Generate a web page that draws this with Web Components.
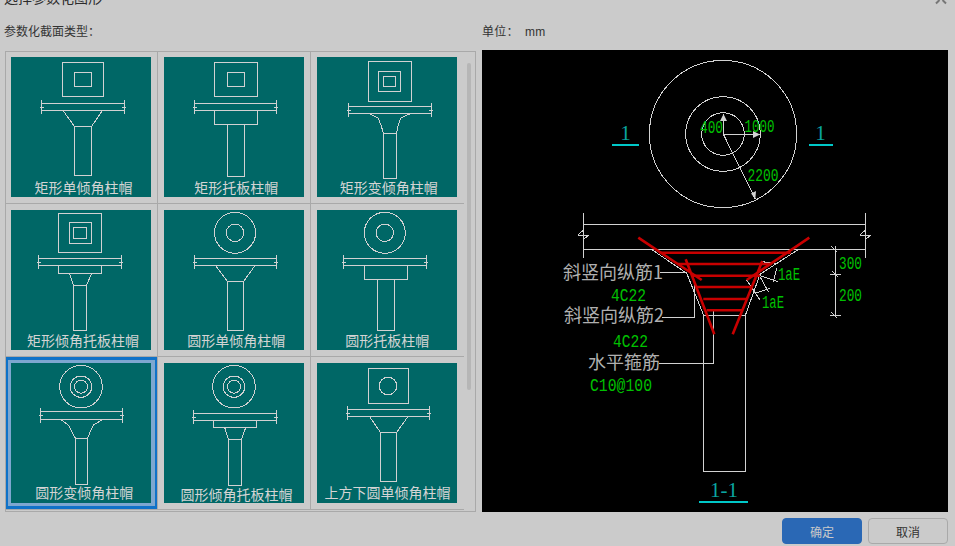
<!DOCTYPE html>
<html lang="zh"><head><meta charset="utf-8"><title>选择参数化图形</title>
<style>
html,body{margin:0;padding:0;height:100%;overflow:hidden;background:#cbcbcb}
body{font-family:"Liberation Sans","Noto Sans CJK SC",sans-serif}
</style></head><body>
<param-dialog>
  <span slot="title">选择参数化图形</span>
  <span slot="listlabel">参数化截面类型：</span>
  <span slot="unit">单位：</span><span slot="unitval">mm</span>
  <cap-thumb slot="list" data-v="11 57" style="--dx:2.5px;--dy:0px" data-d="r62.5,62.5,103.5,96.5 r74.5,72.5,91.5,86.5 s41.5,124.5,103.5,110.5 p63,110.5,74.5,126.5 p102.5,110.5,91.5,126.5 r74.5,126.5,91.5,175.5">矩形单倾角柱帽</cap-thumb>
  <cap-thumb slot="list" data-v="164 57" style="--dx:2.3px;--dy:0px" data-d="r214.5,62.5,257.5,96.5 r227.5,72.5,244.5,86.5 s194.5,276.5,103.5,110.5 r214.5,110.5,257.5,124.5 r227.5,124.5,244.5,176.5">矩形托板柱帽</cap-thumb>
  <cap-thumb slot="list" end data-v="317 57" style="--dx:1.7px;--dy:0px" data-d="r368.5,61.5,411.5,101.5 r378.5,71.5,400.5,91.5 r383.5,76.5,395.5,86.5 s348.5,431.5,106.5,113.5 p369.5,113.5,378,118,381,125,383.5,133.5 p410.5,113.5,400.7,118,398.3,125,396.5,133.5 r383.5,133.5,396.5,178.5">矩形变倾角柱帽</cap-thumb>
  <cap-thumb slot="list" data-v="11 210" style="--dx:2px;--dy:0px" data-d="r58.5,213.5,101.5,252.5 r69.5,222.5,91.5,243.5 r73.5,227.5,86.5,238.5 s38.5,121.5,258.5,265.5 r58.5,265.5,101.5,273.5 p69.5,273.5,73.5,285.5 p91.5,273.5,86.5,285.5 r73.5,285.5,86.5,330.5">矩形倾角托板柱帽</cap-thumb>
  <cap-thumb slot="list" data-v="164 210" style="--dx:2.3px;--dy:0px" data-d="c235,232.8,20.5 c235,232.8,8.7 s194.5,276.5,258.5,265.5 p215.5,265.5,227.5,281.5 p255,265.5,243.5,281.5 r227.5,281.5,243.5,330.5">圆形单倾角柱帽</cap-thumb>
  <cap-thumb slot="list" end data-v="317 210" style="--dx:.3px;--dy:0px" data-d="c384.8,232.8,20.5 c384.8,232.8,8.7 s343.5,426.5,258.5,265.5 r364.5,265.5,407.5,279.5 r377.5,279.5,394.5,330.5">圆形托板柱帽</cap-thumb>
  <cap-thumb slot="list" selected data-v="11 363" style="--dx:3.2px;--dy:-1px" data-d="c81,386.7,21.3 c81,386.7,10.7 c81,386.7,6.5 s40.5,122.5,411.5,419.5 p61,419.5,68.3,425,71,430,75.5,438.5 p102.7,419.5,93.3,425,91,430,87.5,438.5 r75.5,438.5,87.5,484.5">圆形变倾角柱帽</cap-thumb>
  <cap-thumb slot="list" data-v="164 363" style="--dx:2.5px;--dy:1px" data-d="c234,386.7,21.3 c234,386.7,10.7 c234,386.7,6.5 s193.5,276.5,413.5,420.5 r213.5,420.5,256.5,427.5 p224.7,427.5,228.5,439.5 p245.7,427.5,241.5,439.5 r228.5,439.5,241.5,485.5">圆形倾角托板柱帽</cap-thumb>
  <cap-thumb slot="list" end data-v="317 363" style="--dx:.5px;--dy:-1px" data-d="r368.5,368.5,408.5,403.5 c388,386,8.7 s347.5,429.5,409.5,416.5 p369.5,416.5,380.5,432.5 p408,416.5,396.5,432.5 r380.5,432.5,396.5,481.5">上方下圆单倾角柱帽</cap-thumb>
  <cad-drawing slot="drawing"></cad-drawing>
  <dlg-button slot="ok" primary>确定</dlg-button>
  <dlg-button slot="cancel">取消</dlg-button>
</param-dialog>
<script>
class ParamDialog extends HTMLElement{
  constructor(){super();this.attachShadow({mode:'open'}).innerHTML=`<style>
  :host{display:flex;flex-direction:column;width:955px;height:546px;overflow:hidden;font-size:12px;color:#333;box-sizing:border-box}
  .title{height:14px;margin:-9px 0 0 4px;font-size:14px;line-height:14px;color:#2c2c2c;flex:none;display:flex;justify-content:space-between}
  .x{margin:0 8px 0 0;width:16px;height:14px}
  .labels{display:flex;margin-top:17px;height:20px;line-height:20px;flex:none}
  .labels .a{width:482px;padding-left:4px;box-sizing:border-box}
  .labels .b{display:flex;gap:6px;letter-spacing:.3px}
  .main{display:flex;margin-top:8px;flex:none;height:463px}
  .list{margin:1px 0 0 5px;width:471px;height:461px;box-sizing:border-box;border:1px solid #a9a9a9;position:relative;flex:none}
  .grid{display:grid;grid-template-columns:repeat(3,153px);grid-auto-rows:153px;width:459px;margin:-1px 0 0 -1px}
  .bar{position:absolute;left:461px;top:11px;width:4px;height:327px;background:#b6b6b6;border-radius:2px}
  .draw{margin-left:6px;width:466px;height:462px;background:#000;flex:none}
  .foot{display:flex;justify-content:flex-end;gap:6px;padding:5px 7px 0 0}
  </style>
  <div class="title"><slot name="title"></slot><svg class="x" viewBox="0 0 16 14"><path d="M5 12.5L8.5 9M15 12.5L11.5 9" fill="none" stroke="#777" stroke-width="2"/></svg></div>
  <div class="labels"><div class="a"><slot name="listlabel"></slot></div><div class="b"><slot name="unit"></slot><slot name="unitval"></slot></div></div>
  <div class="main">
    <div class="list"><div class="grid"><slot name="list"></slot></div><div class="bar"></div></div>
    <div class="draw"><slot name="drawing"></slot></div>
  </div>
  <div class="foot"><slot name="ok"></slot><slot name="cancel"></slot></div>`;}
}
class CapThumb extends HTMLElement{
  constructor(){super();this.attachShadow({mode:'open'});}
  connectedCallback(){
    const [ox,oy]=this.dataset.v.split(' ').map(Number);
    const pts=s=>s.slice(1).split(',').map(Number);
    let g='';
    for(const t of this.dataset.d.split(' ')){
      const n=pts(t);
      if(t[0]=='r')g+=`<rect x="${n[0]}" y="${n[1]}" width="${n[2]-n[0]}" height="${n[3]-n[1]}"/>`;
      if(t[0]=='c')g+=`<circle cx="${n[0]}" cy="${n[1]}" r="${n[2]}"/>`;
      if(t[0]=='p'){let d='M'+n[0]+' '+n[1];for(let i=2;i<n.length;i+=2)d+='L'+n[i]+' '+n[i+1];g+=`<path d="${d}"/>`;}
      if(t[0]=='s'){const [a,b,y1,y2]=n;const m=(y1+y2)/2;
        g+=`<path d="M${a} ${y1}H${b}M${a} ${y2}H${b}M${a} ${y1-3.5}V${y2+3}M${b} ${y1-3.5}V${y2+3}M${a-1.5} ${m}h4M${b-2.5} ${m}h4"/>`;}
    }
    this.shadowRoot.innerHTML=`<style>
    :host{display:block;box-sizing:border-box;position:relative;border-right:1px solid #a9a9a9;border-bottom:1px solid #a9a9a9;padding:6px 0 0 6px;width:153px;height:153px}
    :host([end]){border-right:none}
    .pic{position:relative;width:140px;height:140px;background:#006766}
    svg{display:block;width:140px;height:140px;shape-rendering:crispEdges}
    svg *{fill:none;stroke:#d2d2d2;stroke-width:1}
    .cap{position:absolute;left:0;right:0;bottom:1px;height:18px;text-align:center;font:14px/18px "Noto Sans CJK SC",sans-serif;color:#d4d4d4;white-space:nowrap;transform:translate(var(--dx,0),var(--dy,0))}
    .sel{display:none;position:absolute;left:1px;top:0;width:151px;height:152px;box-sizing:border-box;border:solid #0f72c8;border-width:3px 2px;pointer-events:none}
    .sel::after{content:"";position:absolute;inset:0;border:solid #7da7d0;border-width:3px 4px 3px 3px}
    :host([selected]) .sel{display:block}
    </style>
    <div class="pic"><svg viewBox="${ox} ${oy} 140 140">${g}</svg><div class="cap"><slot></slot></div></div><div class="sel"></div>`;
  }
}
class DlgButton extends HTMLElement{
  constructor(){super();this.attachShadow({mode:'open'}).innerHTML=`<style>
  :host{display:flex;align-items:center;justify-content:center;width:80px;height:26px;box-sizing:border-box;border-radius:4px;border:1px solid #a9a9a9;color:#333;font:12px "Noto Sans CJK SC",sans-serif}
  :host([primary]){background:#2a68b5;border-color:#2a68b5;color:#c9c9c9}
  </style><slot></slot>`;}
}
class CadDrawing extends HTMLElement{
  constructor(){super();this.attachShadow({mode:'open'}).innerHTML=`<style>
  :host{display:block;width:466px;height:462px}
  svg{display:block}
  .w{fill:none;stroke:#d2d2d2;stroke-width:1;shape-rendering:crispEdges}
  .a{fill:#d2d2d2;stroke:none}
  .r{fill:none;stroke:#c80000;stroke-width:2.6}
  .cy{fill:none;stroke:#00c8c8;stroke-width:2;shape-rendering:crispEdges}
  text{font-family:"Liberation Mono",monospace;font-size:19px;stroke:none}
  .g{fill:#00c000}
  .t{fill:#0aa6a0;font:21px "Liberation Serif",serif}
  .l{fill:#b0b0b0;font:18px "Noto Sans CJK SC",sans-serif}
  </style>
  <svg width="466" height="462" viewBox="482 50 466 462">
  <g class="w">
    <circle cx="723" cy="134" r="73.6"/><circle cx="723" cy="134" r="37.4"/><circle cx="723" cy="134" r="21.3"/>
    <path d="M723.5 134.5V114M723.5 134.5H760M723.5 134.5L755.3 199"/>
    <path d="M583.5 213V258M865.5 213V258M583.5 224.5H865.5M583.5 249.5H865.5"/>
    <path d="M578 235H589M578 235L583.5 230M583.5 239.5L589 235M860 235H871M860 235L865.5 230M865.5 239.5L871 235"/>
    <path d="M651.7 249.5L686.7 273.3L703.5 315M798.3 249.5L760 274.3L745.5 315M703.5 315H745.5"/>
    <path d="M703.5 315V471.5H745.5V315"/>
    <path d="M660 272H686.7M662 317.5H694.5V280M659 363.5H713.5V310"/>
    <path d="M835.5 246V316M830 274.5H841M830 315.5H841M831 246L837 252M832 271L838 277M831 312L837 318"/>
    <path d="M761.7 261.7L776.7 263.3M776.7 268.3L773.3 281.7M758.3 275L778.3 281.7M760 276.7L768.3 291.7M746.7 280L760 300M755 293.3L770 288.3"/>
  </g>
  <path class="a" d="M723.5 114L727 121H720ZM760 134.5L753 131V138ZM755.3 199L751 193.5L756 191Z"/>
  <g class="r">
    <path d="M638.3 237.7L701.7 280M809.3 237.7L746.7 280M685.7 259.3L714.3 334.3M762.3 261L732.7 334.3"/>
    <path d="M659.3 252.7H790.7M678 264H771.7M693 275.7H760M695.7 287H751.7M703.3 299H746.7M706.7 310.3H742.7"/>
  </g>
  <path class="cy" d="M612 145H639M809 145H833M699 502H748"/>
  <text class="t" x="625.5" y="140" text-anchor="middle">1</text>
  <text class="t" x="820.5" y="140" text-anchor="middle">1</text>
  <text class="t" x="710" y="497" textLength="28" lengthAdjust="spacingAndGlyphs">1-1</text>
  <text class="g" x="700" y="133" textLength="23" lengthAdjust="spacingAndGlyphs">400</text>
  <text class="g" x="744.5" y="132" textLength="30" lengthAdjust="spacingAndGlyphs">1000</text>
  <text class="g" x="747.5" y="180.5" textLength="31" lengthAdjust="spacingAndGlyphs">2200</text>
  <text class="g" x="839" y="269" textLength="23" lengthAdjust="spacingAndGlyphs">300</text>
  <text class="g" x="839" y="301" textLength="23" lengthAdjust="spacingAndGlyphs">200</text>
  <text class="g" x="778" y="280" textLength="22" lengthAdjust="spacingAndGlyphs">1aE</text>
  <text class="g" x="762" y="307.5" textLength="22" lengthAdjust="spacingAndGlyphs">1aE</text>
  <text class="g" x="611" y="301" textLength="35" lengthAdjust="spacingAndGlyphs">4C22</text>
  <text class="g" x="613" y="346.5" textLength="35" lengthAdjust="spacingAndGlyphs">4C22</text>
  <text class="g" x="590" y="391" textLength="62" lengthAdjust="spacingAndGlyphs">C10@100</text>
  <text class="l" x="563" y="279">斜竖向纵筋1</text>
  <text class="l" x="564" y="322">斜竖向纵筋2</text>
  <text class="l" x="588" y="369">水平箍筋</text>
  </svg>`;}
}
customElements.define('param-dialog',ParamDialog);
customElements.define('cap-thumb',CapThumb);
customElements.define('dlg-button',DlgButton);
customElements.define('cad-drawing',CadDrawing);
</script>
</body></html>
